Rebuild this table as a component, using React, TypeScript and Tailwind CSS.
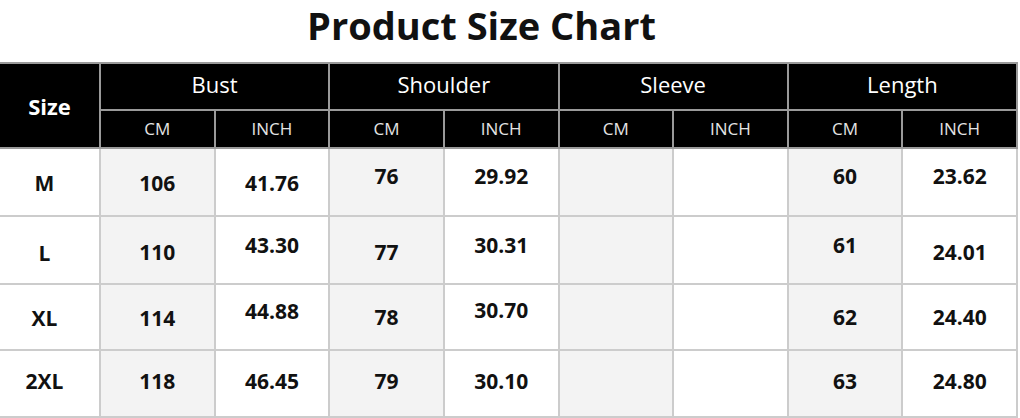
const groups = ["Bust", "Shoulder", "Sleeve", "Length"];

type Cell = { v: string; pad: string };

const c = (v: string, pad = ""): Cell => ({ v, pad });

const rows: { size: Cell; cells: Cell[]; h: string }[] = [
  {
    h: "h-[68px]",
    size: c("M", "pt-[4px]"),
    cells: [c("106", "pt-[4px]"), c("41.76", "pt-[4px]"), c("76", "pb-[10px]"), c("29.92", "pb-[10px]"), c(""), c(""), c("60", "pb-[10px]"), c("23.62", "pb-[10px]")],
  },
  {
    h: "h-[68px]",
    size: c("L", "pt-[8px]"),
    cells: [c("110", "pt-[6px]"), c("43.30", "pb-[8px]"), c("77", "pt-[6px]"), c("30.31", "pb-[8px]"), c(""), c(""), c("61", "pb-[8px]"), c("24.01", "pt-[6px]")],
  },
  {
    h: "h-[66px]",
    size: c("XL", "pt-[4px]"),
    cells: [c("114", "pt-[4px]"), c("44.88", "pb-[10px]"), c("78", "pt-[2px]"), c("30.70", "pb-[12px]"), c(""), c(""), c("62", "pt-[2px]"), c("24.40", "pt-[2px]")],
  },
  {
    h: "h-[67px]",
    size: c("2XL", "pb-[4px]"),
    cells: [c("118", "pb-[4px]"), c("46.45", "pb-[4px]"), c("79", "pb-[4px]"), c("30.10", "pb-[4px]"), c(""), c(""), c("63", "pb-[4px]"), c("24.80", "pb-[4px]")],
  },
];

export default function App() {
  return (
    <main className="w-[1020px] bg-white font-['Open_Sans',sans-serif]">
      <div className="flex justify-center pt-[2px] pb-[14px] pr-[57px]">
        <h1 className="text-[38px] font-bold text-[#111] leading-[46px] whitespace-nowrap">Product Size Chart</h1>
      </div>
      <table className="w-[1018px] table-fixed border-collapse">
        <colgroup>
          <col className="w-[100px]" />
          {Array.from({ length: 8 }).map((_, i) => (
            <col key={i} />
          ))}
        </colgroup>
        <thead>
          <tr className="h-[47px]">
            <th rowSpan={2} className="bg-black text-white text-[22px] font-bold border-2 border-l-0 border-[#9a9a9a] pt-[2px]">
              Size
            </th>
            {groups.map((g) => (
              <th key={g} colSpan={2} className="bg-black text-white text-[22px] font-normal border-2 border-[#9a9a9a] pb-[4px]">
                {g}
              </th>
            ))}
          </tr>
          <tr className="h-[38px]">
            {groups.map((g) => (
              <>
                <th key={g + "cm"} className="bg-black text-[#e4e4e4] text-[17px] font-normal border-2 border-[#9a9a9a]">
                  CM
                </th>
                <th key={g + "in"} className="bg-black text-[#e4e4e4] text-[17px] font-normal border-2 border-[#9a9a9a]">
                  INCH
                </th>
              </>
            ))}
          </tr>
        </thead>
        <tbody>
          {rows.map((r) => (
            <tr key={r.size.v} className={r.h}>
              <td className={`bg-white text-center text-[21px] font-bold text-[#111] border-2 border-l-0 border-[#cccccc] pr-[10px] ${r.size.pad}`}>
                {r.size.v}
              </td>
              {r.cells.map((cell, i) => (
                <td
                  key={i}
                  className={`text-center text-[21px] font-bold text-[#111] border-2 border-[#cccccc] ${i % 2 === 0 ? "bg-[#f3f3f3]" : "bg-white"} ${cell.pad}`}
                >
                  {cell.v}
                </td>
              ))}
            </tr>
          ))}
        </tbody>
      </table>
    </main>
  );
}
